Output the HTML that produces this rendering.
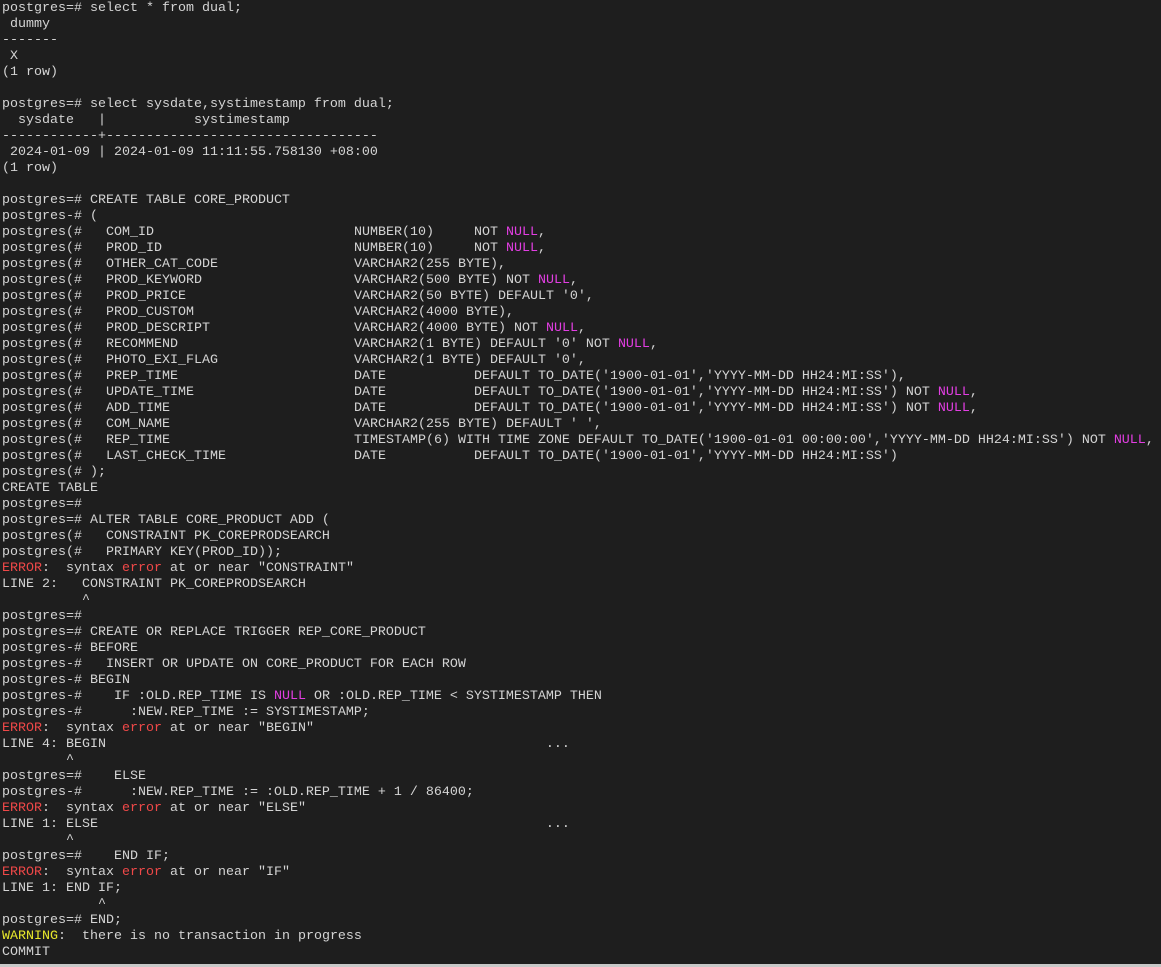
<!DOCTYPE html>
<html><head><meta charset="utf-8"><style>
html,body{margin:0;padding:0;background:#1e1e1e;width:1161px;height:967px;overflow:hidden;position:relative}
pre{margin:0;position:absolute;left:2px;top:1px;font-family:"Liberation Mono",monospace;font-size:13.333px;line-height:16px;color:#d4d4d4;white-space:pre}
.n{color:#e23ee2}.e{color:#ef4848}.w{color:#e8e82c}
.a{display:inline-block;width:248px}.b{display:inline-block;width:120px}
.bar{position:absolute;left:0;right:0;bottom:0;height:3px;background:#c8c8c8}
</style></head><body><pre>postgres=# select * from dual;
 dummy
-------
 X
(1 row)

postgres=# select sysdate,systimestamp from dual;
  sysdate   |           systimestamp
------------+----------------------------------
 2024-01-09 | 2024-01-09 11:11:55.758130 +08:00
(1 row)

postgres=# CREATE TABLE CORE_PRODUCT
postgres-# (
postgres(#   <span class="a">COM_ID</span><span class="b">NUMBER(10)</span>NOT <span class="n">NULL</span>,
postgres(#   <span class="a">PROD_ID</span><span class="b">NUMBER(10)</span>NOT <span class="n">NULL</span>,
postgres(#   <span class="a">OTHER_CAT_CODE</span>VARCHAR2(255 BYTE),
postgres(#   <span class="a">PROD_KEYWORD</span>VARCHAR2(500 BYTE) NOT <span class="n">NULL</span>,
postgres(#   <span class="a">PROD_PRICE</span>VARCHAR2(50 BYTE) DEFAULT '0',
postgres(#   <span class="a">PROD_CUSTOM</span>VARCHAR2(4000 BYTE),
postgres(#   <span class="a">PROD_DESCRIPT</span>VARCHAR2(4000 BYTE) NOT <span class="n">NULL</span>,
postgres(#   <span class="a">RECOMMEND</span>VARCHAR2(1 BYTE) DEFAULT '0' NOT <span class="n">NULL</span>,
postgres(#   <span class="a">PHOTO_EXI_FLAG</span>VARCHAR2(1 BYTE) DEFAULT '0',
postgres(#   <span class="a">PREP_TIME</span><span class="b">DATE</span>DEFAULT TO_DATE('1900-01-01','YYYY-MM-DD HH24:MI:SS'),
postgres(#   <span class="a">UPDATE_TIME</span><span class="b">DATE</span>DEFAULT TO_DATE('1900-01-01','YYYY-MM-DD HH24:MI:SS') NOT <span class="n">NULL</span>,
postgres(#   <span class="a">ADD_TIME</span><span class="b">DATE</span>DEFAULT TO_DATE('1900-01-01','YYYY-MM-DD HH24:MI:SS') NOT <span class="n">NULL</span>,
postgres(#   <span class="a">COM_NAME</span>VARCHAR2(255 BYTE) DEFAULT ' ',
postgres(#   <span class="a">REP_TIME</span>TIMESTAMP(6) WITH TIME ZONE DEFAULT TO_DATE('1900-01-01 00:00:00','YYYY-MM-DD HH24:MI:SS') NOT <span class="n">NULL</span>,
postgres(#   <span class="a">LAST_CHECK_TIME</span><span class="b">DATE</span>DEFAULT TO_DATE('1900-01-01','YYYY-MM-DD HH24:MI:SS')
postgres(# );
CREATE TABLE
postgres=#
postgres=# ALTER TABLE CORE_PRODUCT ADD (
postgres(#   CONSTRAINT PK_COREPRODSEARCH
postgres(#   PRIMARY KEY(PROD_ID));
<span class="e">ERROR</span>:  syntax <span class="e">error</span> at or near "CONSTRAINT"
LINE 2:   CONSTRAINT PK_COREPRODSEARCH
          ^
postgres=#
postgres=# CREATE OR REPLACE TRIGGER REP_CORE_PRODUCT
postgres-# BEFORE
postgres-#   INSERT OR UPDATE ON CORE_PRODUCT FOR EACH ROW
postgres-# BEGIN
postgres-#    IF :OLD.REP_TIME IS <span class="n">NULL</span> OR :OLD.REP_TIME &lt; SYSTIMESTAMP THEN
postgres-#      :NEW.REP_TIME := SYSTIMESTAMP;
<span class="e">ERROR</span>:  syntax <span class="e">error</span> at or near "BEGIN"
LINE 4: BEGIN                                                       ...
        ^
postgres=#    ELSE
postgres-#      :NEW.REP_TIME := :OLD.REP_TIME + 1 / 86400;
<span class="e">ERROR</span>:  syntax <span class="e">error</span> at or near "ELSE"
LINE 1: ELSE                                                        ...
        ^
postgres=#    END IF;
<span class="e">ERROR</span>:  syntax <span class="e">error</span> at or near "IF"
LINE 1: END IF;
            ^
postgres=# END;
<span class="w">WARNING</span>:  there is no transaction in progress
COMMIT</pre><div class="bar"></div></body></html>
